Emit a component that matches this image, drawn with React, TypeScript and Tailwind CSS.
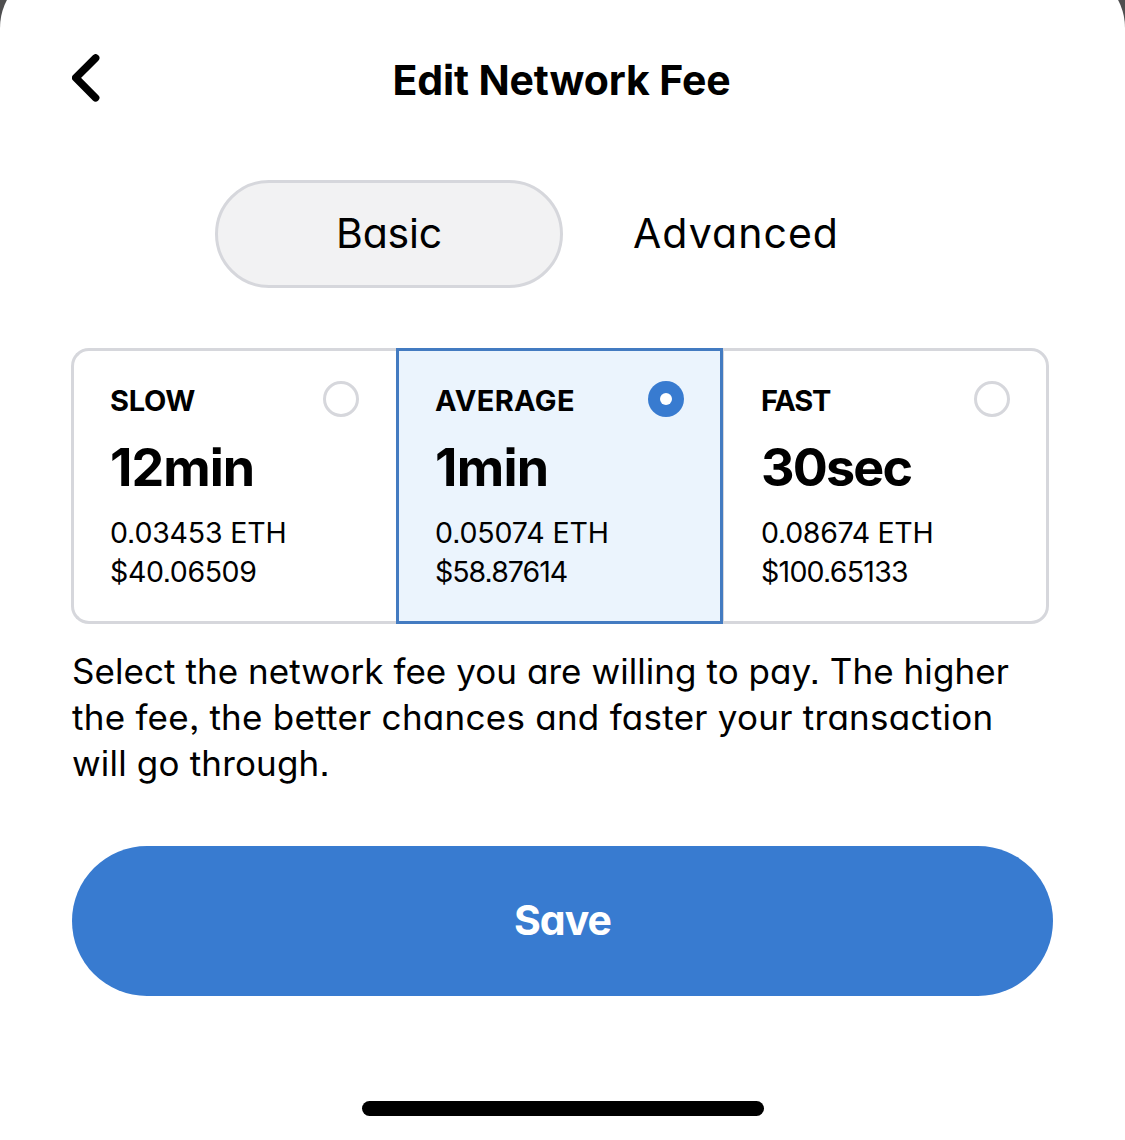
import React, { useState } from 'react';
import clsx from 'clsx';

interface FeeOption {
  id: string;
  label: string;
  time: string;
  eth: string;
  usd: string;
  labelClass: string;
  timeClass: string;
  ethClass: string;
  usdClass: string;
}

const FEES: FeeOption[] = [
  {
    id: 'slow',
    label: 'SLOW',
    time: '12min',
    eth: '0.03453 ETH',
    usd: '$40.06509',
    labelClass: 'tracking-[-0.3px]',
    timeClass: 'tracking-[-1px]',
    ethClass: 'tracking-[-0.18px]',
    usdClass: 'tracking-[-0.4px]',
  },
  {
    id: 'average',
    label: 'AVERAGE',
    time: '1min',
    eth: '0.05074 ETH',
    usd: '$58.87614',
    labelClass: 'tracking-[0.35px]',
    timeClass: 'tracking-[-0.7px]',
    ethClass: 'tracking-[-0.12px]',
    usdClass: 'tracking-[-1px]',
  },
  {
    id: 'fast',
    label: 'FAST',
    time: '30sec',
    eth: '0.08674 ETH',
    usd: '$100.65133',
    labelClass: 'tracking-[-1.2px]',
    timeClass: 'tracking-[-1.8px]',
    ethClass: 'tracking-[-0.3px]',
    usdClass: 'tracking-[-0.75px]',
  },
];

const Radio: React.FC<{ checked: boolean }> = ({ checked }) => (
  <span
    className={clsx(
      'flex size-9 shrink-0 items-center justify-center rounded-full',
      checked ? 'bg-[#387bd0]' : 'border-3 border-[#d6d7dc] bg-white',
    )}
  >
    {checked && <span className="size-3 rounded-full bg-white" />}
  </span>
);

const FeeCard: React.FC<{ fee: FeeOption; selected: boolean; onSelect: () => void }> = ({ fee, selected, onSelect }) => (
  <button
    type="button"
    onClick={onSelect}
    className={clsx(
      'flex h-[276px] flex-col border-3 pt-[30px] pr-9 pl-9 text-left whitespace-nowrap',
      selected ? 'border-[#437bc1] bg-[#ebf4fd]' : 'border-[#d6d7dc] bg-white',
      fee.id === 'slow' && 'w-[325px] rounded-l-[18px] border-r-0 pr-[37px]',
      fee.id === 'average' && 'w-[327px]',
      fee.id === 'fast' && 'w-[326px] rounded-r-[18px] border-l pl-[37px]',
    )}
  >
    <span className="flex w-full items-start justify-between">
      <span className={clsx('mt-[2px] text-[29px] leading-9 font-bold', fee.labelClass)}>{fee.label}</span>
      <Radio checked={selected} />
    </span>
    <span className={clsx('mt-[18px] text-[52px] leading-[62px] font-bold', fee.timeClass)}>{fee.time}</span>
    <span className={clsx('mt-[14px] text-[28.5px] leading-[39px]', fee.ethClass)}>{fee.eth}</span>
    <span className={clsx('text-[28.5px] leading-[39px]', fee.usdClass)}>{fee.usd}</span>
  </button>
);

export default function App() {
  const [selected, setSelected] = useState('average');

  return (
    <div className="h-[1140px] w-[1125px] overflow-hidden bg-[#4f4f50] font-['Inter','Liberation_Sans',sans-serif] text-black [font-feature-settings:'cv11','ss03','ss07']">
      <main className="-mt-8 flex h-[1172px] flex-col rounded-t-[60px] bg-white pt-20">
        <header className="grid h-[66px] grid-cols-[1fr_auto_1fr] items-start px-[72px]">
          <button type="button" aria-label="Back" className="mt-[6px] justify-self-start">
            <svg width="28" height="48" viewBox="0 0 28 48" fill="none" stroke="black" strokeWidth="7.6" strokeLinecap="round" strokeLinejoin="round">
              <path d="M23.6 4L3.8 23.8L23.6 43.8" />
            </svg>
          </button>
          <h1 className="mt-[7px] -ml-[2px] text-[41px] leading-[50px] font-bold tracking-[-0.12px]">Edit Network Fee</h1>
        </header>

        <div className="mt-[66px] ml-[215px] flex h-[108px] text-[41px]">
          <button type="button" className="w-[348px] rounded-full border-3 border-[#d6d7dc] bg-[#f2f2f3] tracking-[-0.2px]">
            Basic
          </button>
          <button type="button" className="w-[346px] tracking-[1.05px]">
            Advanced
          </button>
        </div>

        <section className="mt-[60px] ml-[71px] flex w-[978px]">
          {FEES.map((fee) => (
            <FeeCard key={fee.id} fee={fee} selected={selected === fee.id} onSelect={() => setSelected(fee.id)} />
          ))}
        </section>

        <p className="mt-[24px] ml-[72px] text-[35px] leading-[46px] whitespace-nowrap">
          <span className="block tracking-[0.06px]">Select the network fee you are willing to pay. The higher</span>
          <span className="block tracking-[0.26px]">the fee, the better chances and faster your transaction</span>
          <span className="block tracking-[0.18px]">will go through.</span>
        </p>

        <button type="button" className="mt-[60px] ml-[72px] h-[150px] w-[981px] rounded-full bg-[#387bd0] text-[41px] font-bold tracking-[-1px] text-white">
          Save
        </button>

        <div className="mt-[105px] ml-[362px] h-[15px] w-[402px] rounded-full bg-black" />
      </main>
    </div>
  );
}
